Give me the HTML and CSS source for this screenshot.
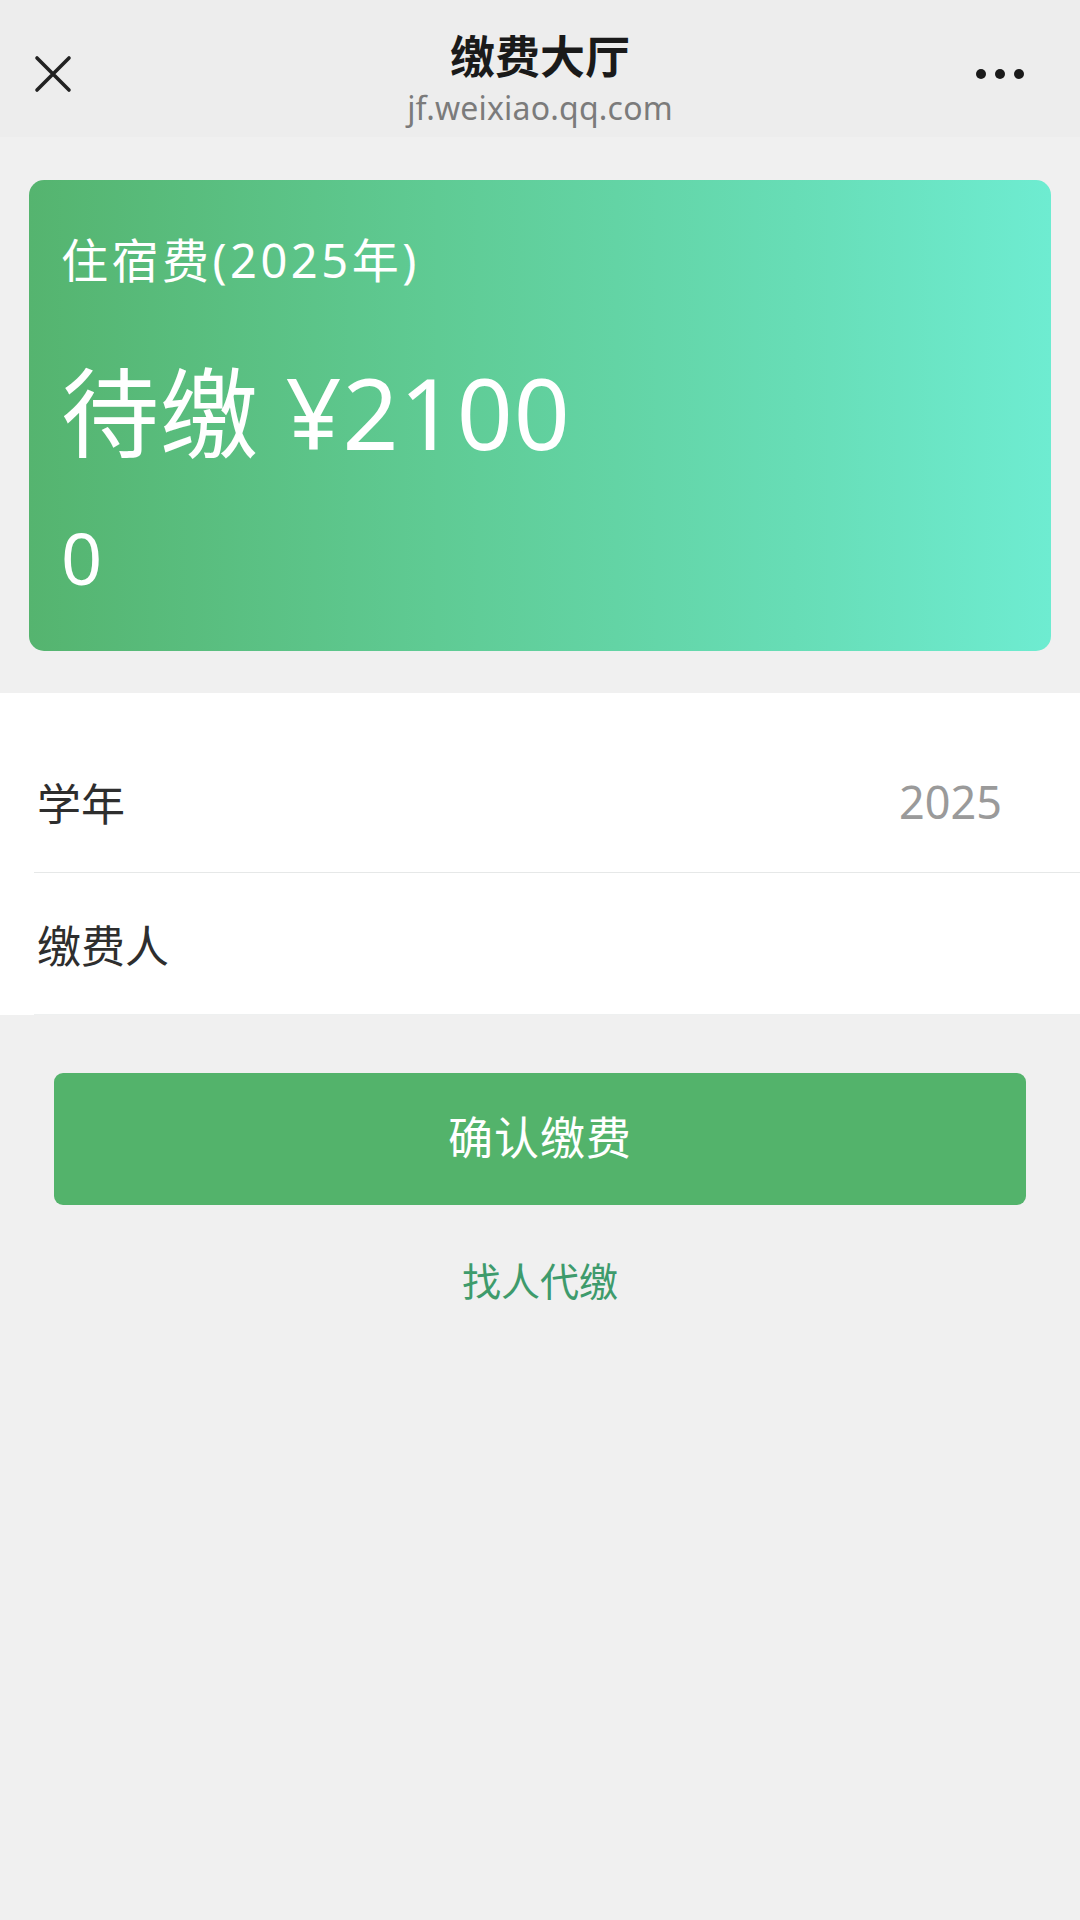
FILE: index.html
```html
<!DOCTYPE html>
<html lang="zh-CN">
<head>
    <meta charset="UTF-8">
    <meta name="viewport" content="width=device-width, initial-scale=1.0">
    <title>缴费大厅</title>
    <link rel="stylesheet" href="styles.css">
</head>
<body>
<header class="topbar">
    <div class="topbar-side">
        <svg class="icon-close" width="38" height="38" viewBox="0 0 38 38">
            <path d="M3 3 L35 35 M35 3 L3 35" stroke="#222" stroke-width="3.6" stroke-linecap="round" fill="none"/>
        </svg>
    </div>
    <div class="topbar-center">
        <div class="topbar-title">缴费大厅</div>
        <div class="topbar-url">jf.weixiao.qq.com</div>
    </div>
    <div class="topbar-side right">
        <svg class="icon-more" width="54" height="12" viewBox="0 0 54 12">
            <circle cx="6" cy="6" r="5" fill="#1a1a1a"/>
            <circle cx="25" cy="6" r="5" fill="#1a1a1a"/>
            <circle cx="44" cy="6" r="5" fill="#1a1a1a"/>
        </svg>
    </div>
</header>

<main>
    <section class="fee-card">
        <div class="fee-name">住宿费(2025年)</div>
        <div class="fee-amount">待缴 ¥2100</div>
        <div class="fee-extra">0</div>
    </section>

    <section class="info-list">
        <div class="info-row">
            <span class="info-label">学年</span>
            <span class="info-value">2025</span>
        </div>
        <div class="info-row">
            <span class="info-label">缴费人</span>
            <span class="info-value"></span>
        </div>
    </section>

    <div class="actions">
        <button class="btn-pay" type="button">确认缴费</button>
        <a class="link-proxy" href="#">找人代缴</a>
    </div>
</main>
</body>
</html>
```

FILE: styles.css
```css
body { margin: 0; background: #f0f0f0; font-family: "Noto Sans", "Noto Sans CJK SC", sans-serif; color: #333; }

.topbar { display: flex; align-items: flex-start; height: 137px; background: #ededed; padding: 0 51px 0 34px; box-sizing: border-box; }
.topbar-side { width: 127px; padding-top: 55px; }
.topbar-side.right { width: 110px; display: flex; justify-content: flex-end; padding-top: 68px; }
.icon-close { display: block; }
.icon-more { display: block; }
.topbar-center { flex: 1; text-align: center; padding-top: 30px; }
.topbar-title { font-size: 45px; line-height: 54px; font-weight: bold; color: #1a1a1a; }
.topbar-url { font-size: 32px; line-height: 48px; color: #7b7b7b; letter-spacing: 0.2px; }

.fee-card { margin: 43px 29px 0; padding: 52px 32px 54px; border-radius: 15px; color: #fff;
    background: linear-gradient(to right, #55b46f 0%, #5fcb94 40%, #67ddb6 75%, #6eecd1 100%); }
.fee-name { font-size: 47px; line-height: 56px; letter-spacing: 3.5px; }
.fee-amount { font-size: 98px; line-height: 110px; margin-top: 69px; letter-spacing: 1px; }
.fee-extra { font-size: 72px; line-height: 80px; margin-top: 50px; }

.info-list { background: #fff; margin-top: 42px; padding-top: 38px; }
.info-row { display: flex; justify-content: space-between; align-items: center; height: 141px; margin-left: 34px;
    padding: 0 78px 0 3px; border-bottom: 1px solid #e6e8e8; }
.info-row:last-child { border-bottom-color: #eef0f0; }
.info-label { font-size: 44px; color: #2e2e2e; }
.info-value { font-size: 45px; color: #9a9a9a; }

.actions { display: flex; flex-direction: column; align-items: center; padding: 58px 54px 0; }
.btn-pay { width: 100%; height: 132px; padding: 0 0 8px; border: none; border-radius: 9px; background: #53b36b; color: #fff;
    font-family: inherit; font-size: 45px; letter-spacing: 1px; }
.link-proxy { margin-top: 46px; font-size: 39px; line-height: 60px; color: #3e9b6c; text-decoration: none; }
```
